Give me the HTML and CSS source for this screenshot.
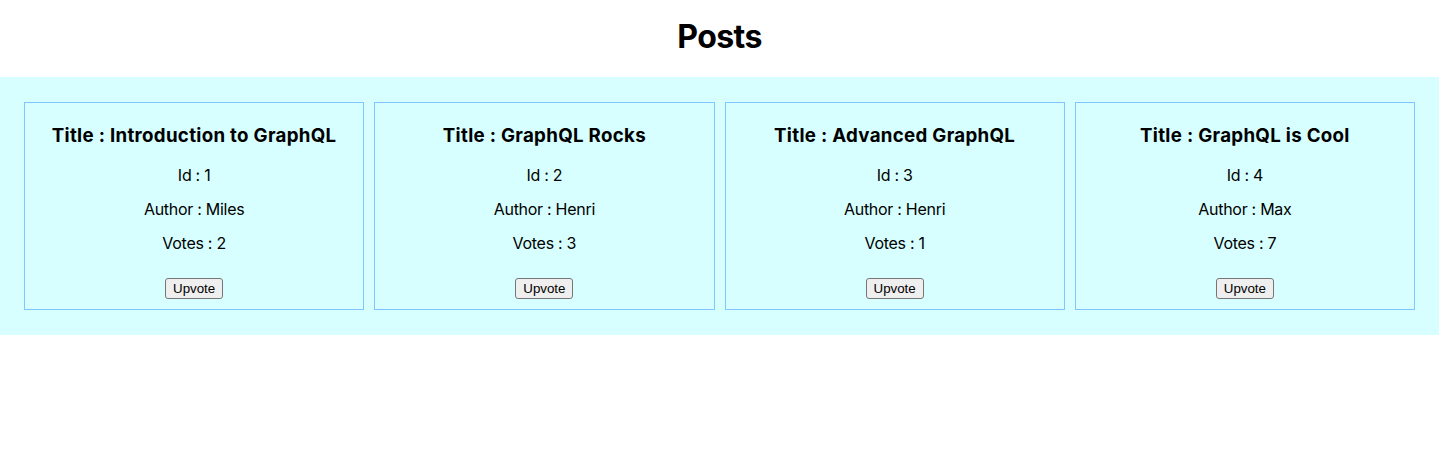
FILE: index.html
```html
<!DOCTYPE html>
<html>
<head>
<meta charset="utf-8">
<title>Posts</title>
<link rel="stylesheet" href="styles.css">
</head>
<body>
<h1 class="page-title">Posts</h1>
<section class="posts">
  <div class="post">
    <h3 class="post-title">Title : Introduction to GraphQL</h3>
    <p class="post-line">Id : 1</p>
    <p class="post-line">Author : Miles</p>
    <p class="post-line">Votes : 2</p>
    <button class="upvote">Upvote</button>
  </div>
  <div class="post">
    <h3 class="post-title">Title : GraphQL Rocks</h3>
    <p class="post-line">Id : 2</p>
    <p class="post-line">Author : Henri</p>
    <p class="post-line">Votes : 3</p>
    <button class="upvote">Upvote</button>
  </div>
  <div class="post">
    <h3 class="post-title">Title : Advanced GraphQL</h3>
    <p class="post-line">Id : 3</p>
    <p class="post-line">Author : Henri</p>
    <p class="post-line">Votes : 1</p>
    <button class="upvote">Upvote</button>
  </div>
  <div class="post">
    <h3 class="post-title">Title : GraphQL is Cool</h3>
    <p class="post-line">Id : 4</p>
    <p class="post-line">Author : Max</p>
    <p class="post-line">Votes : 7</p>
    <button class="upvote">Upvote</button>
  </div>
</section>
</body>
</html>
```
FILE: styles.css
```css
html, body {
  margin: 0;
  padding: 0;
  background: #ffffff;
}
body {
  font-family: Inter, "Noto Sans", sans-serif;
  color: #000000;
}
.page-title {
  margin: 17px 0 21px;
  font-size: 32px;
  line-height: 39px;
  font-weight: 700;
  letter-spacing: -0.6px;
  text-align: center;
}
.posts {
  display: flex;
  gap: 10px;
  padding: 25px 24px 25px;
  background: #d7ffff;
}
.post {
  flex: 1 1 0;
  min-width: 0;
  border: 1px solid #80c6ff;
  padding: 0 10px 10px;
  text-align: center;
}
.post-title {
  margin: 21px 0 0;
  font-size: 18.72px;
  line-height: 23px;
  font-weight: 700;
  letter-spacing: 0.3px;
}
.post-line {
  margin: 19px 0 0;
  font-size: 16px;
  line-height: 18px;
  letter-spacing: -0.28px;
}
.post-line + .post-line {
  margin-top: 16px;
}
.upvote {
  display: inline-block;
  margin-top: 26px;
  font-family: "Liberation Sans", Arial, sans-serif;
  font-size: 13.33px;
  line-height: 17px;
  padding: 1px 7px;
  border: 1px solid #767676;
  border-radius: 3px;
  background: #efefef;
  color: #000000;
}
```
